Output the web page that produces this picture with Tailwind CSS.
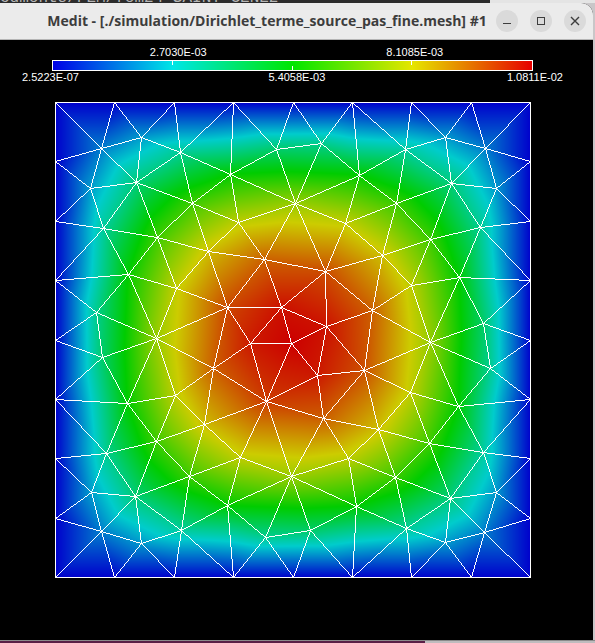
<!DOCTYPE html>
<html lang="en">
<head>
<meta charset="utf-8">
<meta name="viewport" content="width=device-width, initial-scale=1">
<title>Medit - [./simulation/Dirichlet_terme_source_pas_fine.mesh] #1</title>
<script src="https://cdn.jsdelivr.net/npm/@tailwindcss/browser@4"></script>
</head>
<body class="flex min-h-screen flex-col overflow-x-hidden bg-[#c9c6c8] font-['Liberation_Sans',sans-serif]">
  <!-- windows behind -->
  <div class="flex h-[3px] overflow-hidden bg-[#e4e4e4]" aria-hidden="true">
    <div class="flex h-[3px] w-[82.4%] items-end overflow-hidden bg-[#2c2c2c] text-[#b5b5b5]">
      <span class="whitespace-nowrap font-['Liberation_Mono',monospace] text-base leading-[10px]">cuments/FEM/fem24_SAINT_GENE2</span>
    </div>
  </div>

  <main class="mr-[2px] flex flex-1 flex-col overflow-hidden rounded-tr-xl bg-black">
    <header class="flex h-[37px] items-center gap-3 border-b border-[#b5b5b5] bg-[#ebebeb] pr-[7px] text-[#3d3d3d]">
      <h1 class="-mr-2 min-w-0 flex-1 whitespace-nowrap pl-[42px] text-center font-['Open_Sans','Noto_Sans',sans-serif] text-[14px] leading-5 font-bold">Medit - [./simulation/Dirichlet_terme_source_pas_fine.mesh] #1</h1>
      <button type="button" aria-label="Minimize" class="size-[22px] shrink-0 rounded-full bg-[#dadada]">
        <svg viewBox="0 0 22 22" class="size-full" fill="none" stroke="currentColor" shape-rendering="crispEdges"><path d="M7 13.5h8"/></svg>
      </button>
      <button type="button" aria-label="Maximize" class="size-[22px] shrink-0 rounded-full bg-[#dadada]">
        <svg viewBox="0 0 22 22" class="size-full" fill="none" stroke="currentColor" shape-rendering="crispEdges"><path d="M7.500 7.500h7v7h-7z"/></svg>
      </button>
      <button type="button" aria-label="Close" class="size-[22px] shrink-0 rounded-full bg-[#dadada]">
        <svg viewBox="0 0 22 22" class="size-full" fill="none" stroke="currentColor" stroke-width="1.4"><path d="M7 7l8 8M15 7l-8 8"/></svg>
      </button>
    </header>

    <section class="pt-[6px] pr-[60px] pl-[52px] text-[11px] leading-3 text-white" aria-label="Colour scale">
      <div class="grid grid-cols-2 pl-2 text-center"><span>2.7030E-03</span><span>8.1085E-03</span></div>
      <div class="mt-[2px] grid h-[11px] grid-cols-4 border border-white bg-[linear-gradient(to_right,#0000e6,#00e6e6,#00e600,#e6e600,#e60000)]">
        <i class="h-1 border-r border-white"></i>
        <i class="h-1 self-end border-r border-white"></i>
        <i class="h-1 border-r border-white"></i>
      </div>
      <div class="-mx-[30px] flex justify-between"><span>2.5223E-07</span><span class="ml-2">5.4058E-03</span><span>1.0811E-02</span></div>
    </section>

    <section class="pt-[19px] pr-[62px] pb-8 pl-[55px]">
      <canvas id="mesh" width="476" height="476" class="block w-full [image-rendering:pixelated]" role="img" aria-label="Solution on the triangular mesh"></canvas>
    </section>
  </main>

  <div class="flex h-[3px] border-t border-[#8a8a8a] bg-[#bfbcbe]" aria-hidden="true">
    <div class="w-[71.4%] bg-[#5a1f46]"></div>
  </div>

<script>
const SIZE = 475, OX = 55, OY = 102;
const inner = [
  [101,148],[141,137],[180,152],[90,188],[136,182],[103,228],[192,203],[157,237],[208,251],
  [276,149],[321,143],[230,174],[359,175],[295,203],[238,222],[345,223],[264,259],
  [405,149],[445,137],[485,148],[451,183],[496,188],[396,203],[480,227],[430,239],[382,255],
  [128,274],[176,288],[96,312],[102,357],[156,338],[213,368],[127,403],[175,395],[204,424],
  [325,271],[227,307],[281,307],[326,326],[372,310],[250,343],[291,343],[317,375],[364,370],[266,401],[323,418],
  [411,285],[459,277],[483,323],[430,342],[490,368],[410,392],[458,406],
  [106,453],[156,441],[91,492],[135,496],[189,476],[101,531],[181,530],[141,543],
  [240,457],[291,476],[348,458],[227,505],[356,506],[265,537],[310,530],
  [378,429],[429,443],[483,452],[395,477],[450,498],[496,492],[406,528],[484,532],[445,542]
];
const pts = inner.map(([x, y]) => [x - OX, y - OY]);
for (let i = 0; i < 8; i++) {
  const a = Math.round(i * SIZE / 8), b = Math.round((i + 1) * SIZE / 8);
  pts.push([a, 0], [SIZE, a], [b, SIZE], [0, b]);
}

// Series solution of -Laplace(u) = 1 with u = 0 on the boundary
function solve(x, y) {
  let s = 0;
  for (let m = 1; m < 40; m += 2)
    for (let n = 1; n < 40; n += 2)
      s += Math.sin(m * Math.PI * x) * Math.sin(n * Math.PI * y) / (m * n * (m * m + n * n));
  return s;
}
const peak = solve(0.5, 0.5);
// A sine-shaped part of the source flattens the solution near the walls
const val = pts.map(([px, py]) => {
  const x = px / SIZE, y = py / SIZE;
  const u = 0.8 * solve(x, y) / peak + 0.2 * Math.sin(Math.PI * x) * Math.sin(Math.PI * y);
  return Math.max(0, Math.min(1, u));
});

// Delaunay triangles: circumcircle empty of other nodes
const tris = [];
for (let i = 0; i < pts.length; i++)
  for (let j = i + 1; j < pts.length; j++) {
    if (Math.hypot(pts[i][0] - pts[j][0], pts[i][1] - pts[j][1]) > 120) continue;
    for (let k = j + 1; k < pts.length; k++) {
      const [ax, ay] = pts[i], [bx, by] = pts[j], [cx, cy] = pts[k];
      const d = 2 * (ax * (by - cy) + bx * (cy - ay) + cx * (ay - by));
      if (Math.abs(d) < 1) continue;
      const A = ax * ax + ay * ay, B = bx * bx + by * by, C = cx * cx + cy * cy;
      const ux = (A * (by - cy) + B * (cy - ay) + C * (ay - by)) / d;
      const uy = (A * (cx - bx) + B * (ax - cx) + C * (bx - ax)) / d;
      const r = (ax - ux) ** 2 + (ay - uy) ** 2;
      if (r > 14400) continue;
      if (pts.every(([x, y]) => (x - ux) ** 2 + (y - uy) ** 2 > r - 1e-6)) tris.push([i, j, k]);
    }
  }

const ctx = document.getElementById('mesh').getContext('2d');
const W = SIZE + 1, img = ctx.createImageData(W, W);
const put = (x, y, r, g, b) => {
  const o = (y * W + x) * 4;
  img.data[o] = r; img.data[o + 1] = g; img.data[o + 2] = b; img.data[o + 3] = 255;
};
function shade(x, y, v) {
  const t = v * 4, M = 204;
  if (t < 1) put(x, y, 0, M * t, M);
  else if (t < 2) put(x, y, 0, M, M * (2 - t));
  else if (t < 3) put(x, y, M * (t - 2), M, 0);
  else put(x, y, M, M * (4 - t), 0);
}
for (const t of tris) {
  const [[ax, ay], [bx, by], [cx, cy]] = t.map(i => pts[i]);
  const D = (by - cy) * (ax - cx) + (cx - bx) * (ay - cy);
  for (let y = Math.min(ay, by, cy); y <= Math.max(ay, by, cy); y++)
    for (let x = Math.min(ax, bx, cx); x <= Math.max(ax, bx, cx); x++) {
      const p = ((by - cy) * (x - cx) + (cx - bx) * (y - cy)) / D;
      const q = ((cy - ay) * (x - cx) + (ax - cx) * (y - cy)) / D;
      const s = 1 - p - q;
      if (p > -1e-9 && q > -1e-9 && s > -1e-9) shade(x, y, p * val[t[0]] + q * val[t[1]] + s * val[t[2]]);
    }
}
function line([x0, y0], [x1, y1]) {
  const n = Math.max(Math.abs(x1 - x0), Math.abs(y1 - y0));
  for (let i = 0; i <= n; i++)
    put(Math.round(x0 + (x1 - x0) * i / n), Math.round(y0 + (y1 - y0) * i / n), 255, 255, 255);
}
for (const [i, j, k] of tris) {
  line(pts[i], pts[j]); line(pts[j], pts[k]); line(pts[k], pts[i]);
}
ctx.putImageData(img, 0, 0);
</script>
</body>
</html>
